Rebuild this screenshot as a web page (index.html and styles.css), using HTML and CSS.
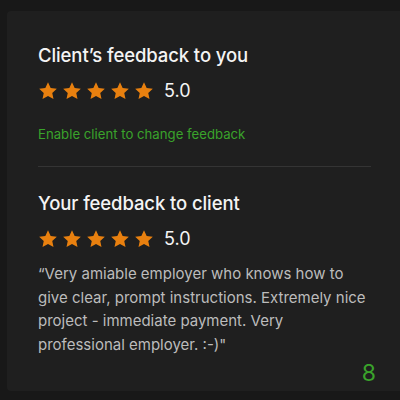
FILE: index.html
```html
<!DOCTYPE html>
<html lang="en">
<head>
<meta charset="utf-8">
<title>Feedback</title>
<link rel="stylesheet" href="styles.css">
</head>
<body>
<div class="card">
  <section class="block">
    <h2 class="title">Client’s feedback to you</h2>
    <div class="rating">
      <span class="stars">
        <svg viewBox="0 0 24 24"><path d="M12 1.5l3.2 6.8 7.4.9-5.5 5.1 1.5 7.3L12 18l-6.6 3.6 1.5-7.3-5.5-5.1 7.4-.9z"/></svg>
        <svg viewBox="0 0 24 24"><path d="M12 1.5l3.2 6.8 7.4.9-5.5 5.1 1.5 7.3L12 18l-6.6 3.6 1.5-7.3-5.5-5.1 7.4-.9z"/></svg>
        <svg viewBox="0 0 24 24"><path d="M12 1.5l3.2 6.8 7.4.9-5.5 5.1 1.5 7.3L12 18l-6.6 3.6 1.5-7.3-5.5-5.1 7.4-.9z"/></svg>
        <svg viewBox="0 0 24 24"><path d="M12 1.5l3.2 6.8 7.4.9-5.5 5.1 1.5 7.3L12 18l-6.6 3.6 1.5-7.3-5.5-5.1 7.4-.9z"/></svg>
        <svg viewBox="0 0 24 24"><path d="M12 1.5l3.2 6.8 7.4.9-5.5 5.1 1.5 7.3L12 18l-6.6 3.6 1.5-7.3-5.5-5.1 7.4-.9z"/></svg>
      </span>
      <span class="score">5.0</span>
    </div>
    <a class="link" href="#">Enable client to change feedback</a>
  </section>
  <hr class="divider">
  <section class="block">
    <h2 class="title">Your feedback to client</h2>
    <div class="rating">
      <span class="stars">
        <svg viewBox="0 0 24 24"><path d="M12 1.5l3.2 6.8 7.4.9-5.5 5.1 1.5 7.3L12 18l-6.6 3.6 1.5-7.3-5.5-5.1 7.4-.9z"/></svg>
        <svg viewBox="0 0 24 24"><path d="M12 1.5l3.2 6.8 7.4.9-5.5 5.1 1.5 7.3L12 18l-6.6 3.6 1.5-7.3-5.5-5.1 7.4-.9z"/></svg>
        <svg viewBox="0 0 24 24"><path d="M12 1.5l3.2 6.8 7.4.9-5.5 5.1 1.5 7.3L12 18l-6.6 3.6 1.5-7.3-5.5-5.1 7.4-.9z"/></svg>
        <svg viewBox="0 0 24 24"><path d="M12 1.5l3.2 6.8 7.4.9-5.5 5.1 1.5 7.3L12 18l-6.6 3.6 1.5-7.3-5.5-5.1 7.4-.9z"/></svg>
        <svg viewBox="0 0 24 24"><path d="M12 1.5l3.2 6.8 7.4.9-5.5 5.1 1.5 7.3L12 18l-6.6 3.6 1.5-7.3-5.5-5.1 7.4-.9z"/></svg>
      </span>
      <span class="score">5.0</span>
    </div>
    <p class="quote">“Very amiable employer who knows how to give clear, prompt instructions. Extremely nice project - immediate payment. Very professional employer. :-)"</p>
  </section>
  <div class="footer"><span class="count">8</span></div>
</div>
</body>
</html>
```
FILE: styles.css
```css
html, body {
  margin: 0;
  padding: 0;
  background: #181818;
  height: 400px;
  overflow: hidden;
}

body {
  padding: 11px 0 0 7px;
  box-sizing: border-box;
  font-family: Inter, "Liberation Sans", Arial, sans-serif;
}

.card {
  background: #1f1f1f;
  height: 380px;
  border-radius: 4px 0 0 4px;
  padding: 31px 24px 0 31px;
  box-sizing: border-box;
  display: flex;
  flex-direction: column;
}

.block {
  display: flex;
  flex-direction: column;
}

.title {
  margin: 0;
  color: #f4f4f4;
  font-size: 18.5px;
  font-weight: 500;
  line-height: 26px;
  letter-spacing: -0.1px;
}

.rating {
  display: flex;
  align-items: center;
  margin-top: 10px;
  height: 26px;
}

.stars {
  display: flex;
  gap: 4px;
}

.stars svg {
  width: 20px;
  height: 20px;
  fill: #e8800f;
}

.score {
  margin-left: 10px;
  color: #f4f4f4;
  font-size: 18px;
  line-height: 26px;
}

.link {
  margin-top: 22px;
  color: #3aa32b;
  font-size: 13.2px;
  line-height: 16px;
  text-decoration: none;
}

.divider {
  border: 0;
  border-top: 1px solid #343434;
  margin: 24px 0 23px;
  width: 333px;
}

.quote {
  margin: 10px 0 0;
  color: #bcbcbc;
  font-size: 15px;
  line-height: 23.7px;
  width: 335px;
}

.footer {
  display: flex;
  justify-content: flex-end;
  margin-top: auto;
  padding-bottom: 5px;
}

.count {
  color: #3aa32b;
  font-size: 23px;
  line-height: 26px;
}
```
